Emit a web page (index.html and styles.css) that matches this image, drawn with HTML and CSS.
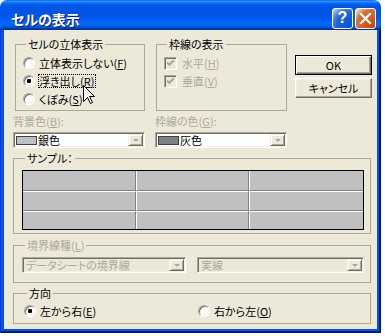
FILE: index.html
```html
<!DOCTYPE html>
<html lang="ja">
<head>
<meta charset="utf-8">
<title>セルの表示</title>
<link rel="stylesheet" href="styles.css">
</head>
<body>
<div class="window">
  <div class="titlebar">
    <span class="title">セルの表示</span>
    <span class="tb-btn help">?</span>
    <span class="tb-btn close">
      <svg width="13" height="13" viewBox="0 0 13 13"><path d="M2 2 L11 11 M11 2 L2 11" stroke="#fff" stroke-width="2.2" stroke-linecap="square"/></svg>
    </span>
  </div>
  <div class="frame">
    <div class="content">
      <div class="row-top">
        <fieldset class="grp g-effect">
          <legend>セルの立体表示</legend>
          <div class="opt"><span class="radio"></span><span class="lbl">立体表示しない(<u>F</u>)</span></div>
          <div class="opt"><span class="radio on"></span><span class="focus">浮き出し(<u>R</u>)</span></div>
          <div class="opt"><span class="radio"></span><span class="lbl">くぼみ(<u>S</u>)</span></div>
        </fieldset>
        <fieldset class="grp g-grid">
          <legend>枠線の表示</legend>
          <div class="opt"><span class="check"><svg width="9" height="9" viewBox="0 0 9 9"><path d="M1 3.5 L3.3 5.8 L8 1.2" fill="none" stroke="#aca899" stroke-width="2"/></svg></span><span class="lbl2 dis">水平(<u>H</u>)</span></div>
          <div class="opt"><span class="check"><svg width="9" height="9" viewBox="0 0 9 9"><path d="M1 3.5 L3.3 5.8 L8 1.2" fill="none" stroke="#aca899" stroke-width="2"/></svg></span><span class="lbl2 dis">垂直(<u>V</u>)</span></div>
        </fieldset>
        <div class="buttons">
          <button class="btn default">OK</button>
          <button class="btn">キャンセル</button>
        </div>
      </div>

      <div class="row-colors">
        <div class="col">
          <div class="label dis">背景色(<u>B</u>):</div>
          <div class="combo"><span class="swatch silver"></span><span class="ctext">銀色</span><span class="dd"><span class="arrow"></span></span></div>
        </div>
        <div class="col">
          <div class="label dis">枠線の色(<u>G</u>):</div>
          <div class="combo"><span class="swatch gray"></span><span class="ctext">灰色</span><span class="dd"><span class="arrow"></span></span></div>
        </div>
      </div>

      <fieldset class="grp sample">
        <legend>サンプル：</legend>
        <div class="table">
          <div class="cell"></div><div class="cell"></div><div class="cell"></div>
          <div class="cell"></div><div class="cell"></div><div class="cell"></div>
          <div class="cell"></div><div class="cell"></div><div class="cell"></div>
        </div>
      </fieldset>

      <fieldset class="grp linetype">
        <legend class="dis">境界線種(<u>L</u>)</legend>
        <div class="combos">
          <div class="combo disabled w1"><span class="ctext dis">データシートの境界線</span><span class="dd"><span class="arrow"></span></span></div>
          <div class="combo disabled w2"><span class="ctext dis">実線</span><span class="dd"><span class="arrow"></span></span></div>
        </div>
      </fieldset>

      <fieldset class="grp dir">
        <legend>方向</legend>
        <div class="dir-row">
          <div class="opt w174"><span class="radio on"></span><span class="lbl">左から右(<u>E</u>)</span></div>
          <div class="opt"><span class="radio"></span><span class="lbl">右から左(<u>O</u>)</span></div>
        </div>
      </fieldset>
    </div>
  </div>
  <svg class="cursor" width="13" height="20" viewBox="0 0 13 20"><path d="M0.5 0.5 L0.5 16.5 L4.5 12.5 L7.5 18.5 L9.5 17.5 L6.5 11.5 L11.5 11.5 Z" fill="#fff" stroke="#000" stroke-width="1"/></svg>
</div>
</body>
</html>
```
FILE: styles.css
```css
* { box-sizing: border-box; }
html, body { margin: 0; padding: 0; background: #fff; }
body {
  font-family: "Noto Sans CJK JP", "Noto Sans", sans-serif;
  font-size: 11px;
  font-feature-settings: "palt";
  color: #000;
}
u { text-decoration: underline; text-underline-offset: 1px; }

.window {
  position: relative;
  width: 381px;
  height: 333px;
  display: flex;
  flex-direction: column;
}

.titlebar {
  height: 30px;
  flex: none;
  border-radius: 7px 7px 0 0;
  display: flex;
  align-items: center;
  padding: 6px 5px 0 11px;
  background: linear-gradient(to bottom, #0058ee 0%, #3593ff 4%, #288eff 6%, #127dff 8%, #036ffc 10%, #0262ee 14%, #0057e5 20%, #0054e3 24%, #0055eb 56%, #005bf5 66%, #026afe 76%, #0062ef 86%, #0052d6 92%, #0040ab 94%, #003092 100%);
}
.title {
  flex: 1;
  color: #fff;
  font-weight: bold;
  font-size: 14px;
  line-height: 16px;
  margin-top: 1px;
  text-shadow: 1px 1px #0f1089;
}
.tb-btn {
  width: 21px;
  height: 21px;
  border: 1px solid #fff;
  border-radius: 3px;
  margin-left: 2px;
  display: flex;
  align-items: center;
  justify-content: center;
}
.help {
  background: radial-gradient(circle at 90% 90%, #0054e9 0%, #2263d5 55%, #4479e4 70%, #a3bbec 90%, #fff 100%);
  color: #fff;
  font: bold 16px/1 "Liberation Sans", sans-serif;
}
.close {
  background: radial-gradient(circle at 90% 90%, #cc4600 0%, #dc6527 55%, #cd7546 70%, #ffccb2 90%, #fff 100%);
}

.frame {
  flex: 1;
  display: flex;
  padding: 0 4px 4px 4px;
  background: #0054e3;
  box-shadow: inset 1px 0 #0831d9, inset -1px -1px #00138c, inset -2px -2px #001ea0;
}
.content {
  flex: 1;
  background: #ece9d8;
  padding: 8px 0 0 9px;
}

fieldset.grp {
  margin: 0;
  padding: 0;
  border: 1px solid #aca899;
  min-width: 0;
}
legend {
  padding: 0 2px;
  margin-left: 3px;
  height: 12px;
  line-height: 12px;
  font-size: 11px;
  white-space: nowrap;
}
.dis { color: #aca899; }

.row-top { display: flex; margin-left: 2px; }
.g-effect { width: 130px; height: 73px; padding: 4px 0 0 7px !important; }
.g-grid { width: 131px; height: 73px; margin-left: 11px !important; padding: 4px 0 0 7px !important; }

.opt {
  display: flex;
  align-items: center;
  height: 18px;
  line-height: 12px;
  white-space: nowrap;
}
.radio {
  flex: none;
  width: 12px;
  height: 12px;
  border-radius: 50%;
  background: #fff;
  border: 1px solid;
  border-color: #aca899 #fff #fff #aca899;
  box-shadow: inset 1px 1px #716f64, inset -1px -1px #f1efe2;
  display: flex;
  align-items: center;
  justify-content: center;
}
.radio.on::after {
  content: "";
  width: 4px;
  height: 4px;
  border-radius: 1px;
  background: #000;
}
.lbl { margin-left: 4px; }
.focus { margin-left: 3px; border: 1px dotted #000; line-height: 12px; padding-right: 1px; }
.check {
  flex: none;
  width: 13px;
  height: 13px;
  background: #ece9d8;
  border: 1px solid;
  border-color: #aca899 #fff #fff #aca899;
  box-shadow: inset 1px 1px #716f64, inset -1px -1px #f1efe2;
  display: flex;
  align-items: center;
  justify-content: center;
}
.lbl2 { margin-left: 5px; }

.buttons {
  margin-left: 8px;
  padding-top: 17px;
  display: flex;
  flex-direction: column;
  gap: 3px;
}
.btn {
  width: 77px;
  height: 20px;
  padding: 0;
  font-family: "Noto Sans CJK JP", "Noto Sans", sans-serif;
  font-size: 11px;
  font-weight: normal;
  font-feature-settings: "palt";
  line-height: 12px;
  color: #000;
  background: #ece9d8;
  border: 1px solid;
  border-color: #fff #716f64 #716f64 #fff;
  box-shadow: inset -1px -1px #aca899, inset 1px 1px #f1efe2;
}
.btn.default {
  border: 1px solid #000;
  box-shadow: inset 1px 1px #fff, inset -1px -1px #716f64, inset -2px -2px #aca899;
}

.row-colors { display: flex; gap: 10px; margin-top: 4px; }
.col { width: 132px; }
.label { height: 13px; line-height: 13px; white-space: nowrap; }
.col .combo { margin-top: 4px; }

.combo {
  height: 16px;
  display: flex;
  align-items: center;
  background: #fff;
  border: 1px solid;
  border-color: #aca899 #fff #fff #aca899;
  box-shadow: inset 1px 1px #716f64, inset -1px -1px #f1efe2;
  padding: 1px;
}
.combo.disabled { background: #ece9d8; }
.swatch {
  flex: none;
  width: 21px;
  height: 9px;
  margin-left: 1px;
  border: 1px solid #404040;
}
.silver { background: #c0c0c0; }
.gray { background: #808080; }
.ctext {
  flex: 1;
  min-width: 0;
  margin-left: 1px;
  line-height: 14px;
  white-space: nowrap;
}
.combo.disabled .ctext { margin-left: 2px; }
.dd {
  flex: none;
  width: 15px;
  height: 12px;
  background: #ece9d8;
  border: 1px solid;
  border-color: #f1efe2 #716f64 #716f64 #f1efe2;
  box-shadow: inset 1px 1px #fff, inset -1px -1px #aca899;
  display: flex;
  align-items: center;
  justify-content: center;
}
.arrow {
  width: 0;
  height: 0;
  border-left: 3px solid transparent;
  border-right: 3px solid transparent;
  border-top: 3px solid #aca899;
  margin-top: 1px;
}

.sample {
  margin-top: 4px !important;
  width: 358px;
  height: 82px;
  padding: 6px 0 0 8px !important;
}
.table {
  width: 342px;
  height: 60px;
  border: 1px solid #000;
  display: grid;
  grid-template-columns: 113px 113px 114px;
  grid-template-rows: 20px 20px 18px;
}
.cell {
  background: #c0c0c0;
  border-top: 1px solid #fff;
  border-left: 1px solid #fff;
  border-right: 1px solid #808080;
  border-bottom: 1px solid #808080;
}
.cell:nth-child(3n+1) { border-left: 0; }
.cell:nth-child(3n) { border-right: 0; }
.cell:nth-child(-n+3) { border-top: 0; }
.cell:nth-child(n+7) { border-bottom: 0; }

.linetype {
  margin-top: 5px !important;
  width: 358px;
  height: 44px;
  padding: 6px 0 0 8px !important;
}
.combos { display: flex; gap: 11px; }
.w1 { width: 164px; }
.w2 { width: 167px; }

.dir {
  margin-top: 4px !important;
  width: 358px;
  height: 37px;
  padding: 3px 0 0 10px !important;
}
.dir-row { display: flex; }
.w174 { width: 174px; }

.cursor {
  position: absolute;
  left: 83px;
  top: 85px;
}
```
